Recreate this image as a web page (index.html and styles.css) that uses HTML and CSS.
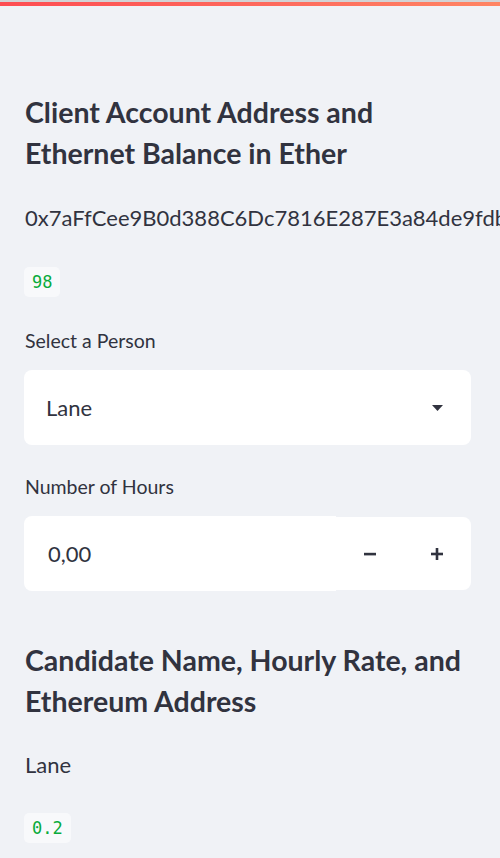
FILE: index.html
```html
<!DOCTYPE html>
<html lang="en">
<head>
<meta charset="utf-8">
<title>Sidebar</title>
<link rel="stylesheet" href="styles.css">
</head>
<body>
<div class="topline"></div>
<div class="decoration"></div>
<aside class="sidebar">
  <h2 class="heading heading-first">Client Account Address and Ethernet Balance in Ether</h2>
  <p class="text address">0x7aFfCee9B0d388C6Dc7816E287E3a84de9fdbe5C</p>
  <code class="code code-first">98</code>

  <label class="label label-first">Select a Person</label>
  <div class="select">
    <span class="select-value">Lane</span>
    <svg class="caret" width="11" height="6" viewBox="0 0 11 6"><path d="M0 0H11L5.5 6Z" fill="#31333f"/></svg>
  </div>

  <label class="label">Number of Hours</label>
  <div class="number">
    <div class="number-input">0,00</div>
    <div class="number-steps">
      <button class="step" type="button" aria-label="decrement">
        <svg width="12" height="12" viewBox="0 0 12 12"><rect x="0" y="4.8" width="12" height="2.6" fill="#31333f"/></svg>
      </button>
      <button class="step" type="button" aria-label="increment">
        <svg width="12" height="12" viewBox="0 0 12 12"><rect x="0" y="4.7" width="12" height="2.6" fill="#31333f"/><rect x="4.7" y="0" width="2.6" height="12" fill="#31333f"/></svg>
      </button>
    </div>
  </div>

  <h2 class="heading heading-second">Candidate Name, Hourly Rate, and Ethereum Address</h2>
  <p class="text name">Lane</p>
  <code class="code code-second">0.2</code>
</aside>
</body>
</html>
```
FILE: styles.css
```css
html, body {
  margin: 0;
  padding: 0;
  background: #f0f2f6;
  overflow: hidden;
}

body {
  width: 500px;
  height: 858px;
  font-family: Lato, "Noto Sans", sans-serif;
  color: #31333f;
}

.topline {
  height: 2px;
  background: #d3d3d5;
}

.decoration {
  height: 4px;
  background: linear-gradient(90deg, #fe4d52 0%, #fe6d5e 60%, #ff8563 100%);
}

.sidebar {
  display: flex;
  flex-direction: column;
  align-items: flex-start;
  padding: 86px 29px 0 24px;
}

.heading {
  margin: 0;
  width: 447px;
  font-size: 28.5px;
  line-height: 41px;
  font-weight: 700;
  padding-left: 1px;
}

.heading-second {
  margin-top: 49px;
}

.text {
  margin: 0;
  font-size: 22px;
  line-height: 33px;
  font-weight: 400;
  white-space: nowrap;
  padding-left: 1px;
}

.address {
  margin-top: 27px;
}

.name {
  margin-top: 26px;
}

.code {
  display: block;
  height: 30px;
  line-height: 30px;
  padding: 0 8px;
  border-radius: 5px;
  background: #f8f9fb;
  color: #09ab3b;
  font-family: "DejaVu Sans Mono", monospace;
  font-size: 17px;
}

.code-first {
  margin-top: 33px;
}

.code-second {
  margin-top: 32px;
}

.label {
  display: block;
  font-size: 19.5px;
  line-height: 28px;
  margin-top: 28px;
  padding-left: 1px;
}

.label-first {
  margin-top: 30px;
}

.select {
  margin-top: 15px;
  width: 447px;
  height: 75px;
  box-sizing: border-box;
  background: #ffffff;
  border-radius: 8px;
  display: flex;
  align-items: center;
  justify-content: space-between;
  padding: 0 28px 0 22px;
  font-size: 22px;
}

.caret {
  display: block;
}

.number {
  margin-top: 15px;
  width: 447px;
  height: 75px;
  display: flex;
  align-items: center;
}

.number-input {
  flex: 0 0 312px;
  height: 75px;
  box-sizing: border-box;
  background: #ffffff;
  border-radius: 8px 0 0 8px;
  display: flex;
  align-items: center;
  padding-left: 24px;
  font-size: 22px;
}

.number-steps {
  flex: 1;
  height: 73px;
  background: #ffffff;
  border-radius: 0 8px 8px 0;
  display: flex;
}

.step {
  flex: 1;
  border: 0;
  background: transparent;
  padding: 0;
  margin: 0;
  display: flex;
  align-items: center;
  justify-content: center;
}

.step svg {
  display: block;
}
```
